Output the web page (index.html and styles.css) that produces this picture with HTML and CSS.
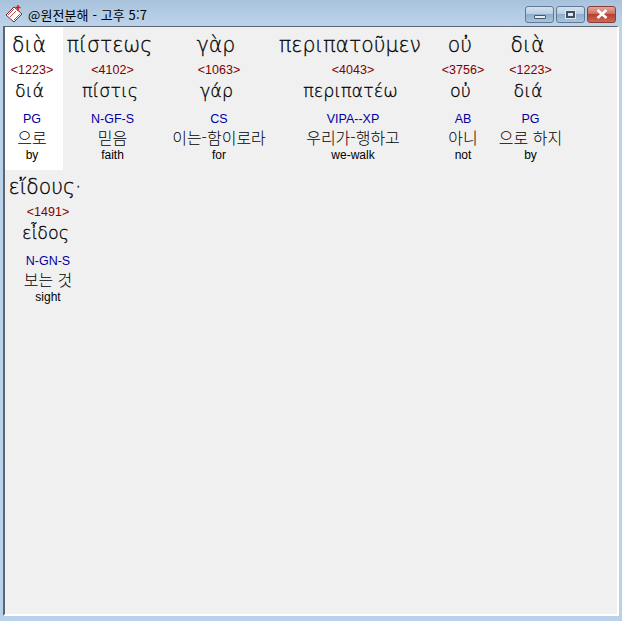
FILE: index.html
```html
<!DOCTYPE html>
<html lang="ko">
<head>
    <meta charset="UTF-8">
    <meta name="viewport" content="width=device-width, initial-scale=1.0">
    <title>원전분해</title>
    <link rel="stylesheet" href="styles.css">
</head>
<body>
    <div class="window">
        <div class="titlebar">
            <svg class="app-icon" width="18" height="18" viewBox="0 0 18 18">
                <path d="M1 10 L9 2 L17 9 L9 17 Z" fill="#fff" stroke="#7a2a2a" stroke-width="1"/>
                <path d="M3 10 L9 4 M5 12 L11 6 M9 15 L15 9" stroke="#c05050" stroke-width="1" fill="none"/>
                <path d="M13 0 V6 M10.5 2.5 H15.5" stroke="#e01010" stroke-width="1.4" fill="none"/>
            </svg>
            <span class="title-text">@원전분해 - 고후 5:7</span>
            <div class="controls">
                <div class="ctl-btn">
                    <span class="min-glyph"></span>
                </div>
                <div class="ctl-btn">
                    <span class="max-glyph"></span>
                </div>
                <div class="ctl-btn close">
                    <svg width="14" height="10" viewBox="0 0 14 10">
                        <path d="M2.5 1 L11.5 9 M11.5 1 L2.5 9" stroke="#fff" stroke-width="2.6" fill="none"/>
                    </svg>
                </div>
            </div>
        </div>
        <div class="client">
            <div class="verse-row">
                <div class="word w1 selected">
                    <div class="head">διὰ</div>
                    <div class="strong">&lt;1223&gt;</div>
                    <div class="lemma">διά</div>
                    <div class="pos">PG</div>
                    <div class="ko">으로</div>
                    <div class="en">by</div>
                </div>
                <div class="word w2">
                    <div class="head">πίστεως</div>
                    <div class="strong">&lt;4102&gt;</div>
                    <div class="lemma">πίστις</div>
                    <div class="pos">N-GF-S</div>
                    <div class="ko">믿음</div>
                    <div class="en">faith</div>
                </div>
                <div class="word w3">
                    <div class="head">γὰρ</div>
                    <div class="strong">&lt;1063&gt;</div>
                    <div class="lemma">γάρ</div>
                    <div class="pos">CS</div>
                    <div class="ko">이는-함이로라</div>
                    <div class="en">for</div>
                </div>
                <div class="word w4">
                    <div class="head">περιπατοῦμεν</div>
                    <div class="strong">&lt;4043&gt;</div>
                    <div class="lemma">περιπατέω</div>
                    <div class="pos">VIPA--XP</div>
                    <div class="ko">우리가-행하고</div>
                    <div class="en">we-walk</div>
                </div>
                <div class="word w5">
                    <div class="head">οὐ</div>
                    <div class="strong">&lt;3756&gt;</div>
                    <div class="lemma">οὐ</div>
                    <div class="pos">AB</div>
                    <div class="ko">아니</div>
                    <div class="en">not</div>
                </div>
                <div class="word w6">
                    <div class="head">διὰ</div>
                    <div class="strong">&lt;1223&gt;</div>
                    <div class="lemma">διά</div>
                    <div class="pos">PG</div>
                    <div class="ko">으로 하지</div>
                    <div class="en">by</div>
                </div>
            </div>
            <div class="verse-row">
                <div class="word w7">
                    <div class="head">εἴδους·</div>
                    <div class="strong">&lt;1491&gt;</div>
                    <div class="lemma">εἶδος</div>
                    <div class="pos">N-GN-S</div>
                    <div class="ko">보는 것</div>
                    <div class="en">sight</div>
                </div>
            </div>
        </div>
    </div>
</body>
</html>
```

FILE: styles.css
```css
html, body {
    margin: 0;
    padding: 0;
}

body {
    width: 622px;
    height: 621px;
    overflow: hidden;
    font-family: "Liberation Sans", Arial, sans-serif;
}

.window {
    width: 622px;
    height: 621px;
    display: flex;
    flex-direction: column;
    background: linear-gradient(to bottom, #a9c2dc 0, #bcd3ea 26px, #b9d1ea 100%);
}

.titlebar {
    height: 26px;
    flex: none;
    display: flex;
    align-items: center;
    padding: 2px 6px 0 5px;
    box-sizing: border-box;
}

.app-icon {
    flex: none;
}

.title-text {
    margin-left: 5px;
    font-family: "Noto Sans CJK KR", "Liberation Sans", sans-serif;
    font-size: 13px;
    letter-spacing: 0.1px;
    color: #000;
}

.controls {
    margin-left: auto;
    display: flex;
    gap: 2px;
}

.ctl-btn {
    width: 27px;
    height: 15px;
    border: 1px solid #5f7a98;
    border-radius: 3px;
    background: linear-gradient(to bottom, #d5e2ef 0, #b9cde2 45%, #92aecb 50%, #a9c3dc 100%);
    display: flex;
    align-items: center;
    justify-content: center;
}

.ctl-btn.close {
    border-color: #8a3f36;
    background: linear-gradient(to bottom, #e2a79c 0, #cf6f5f 45%, #b8402e 50%, #cc6a58 100%);
}

.min-glyph {
    width: 12px;
    height: 4px;
    margin-top: 6px;
    background: #e8eef5;
    border: 1px solid #47586c;
    box-sizing: border-box;
    border-radius: 1px;
}

.max-glyph {
    width: 9px;
    height: 7px;
    box-sizing: border-box;
    border: 2px solid #3e5066;
    outline: 1px solid #dfe8f1;
    background: #dfe8f1;
}

.client {
    flex: 1;
    margin: 0 3px 5px 3px;
    background-color: #f0f0f0;
    border-left: 2px solid #5c6670;
    border-top: 1px solid #5c6670;
    border-right: 2px solid #fff;
    border-bottom: 2px solid #fff;
    box-sizing: border-box;
}

.verse-row {
    display: flex;
}

.word {
    flex: none;
    height: 143px;
    box-sizing: border-box;
    display: flex;
    flex-direction: column;
    align-items: center;
    padding-top: 1px;
}

.word.selected {
    background-color: #fff;
}

.w1 { width: 58px; padding-right: 4px; }
.w2 { width: 99px; }
.w3 { width: 114px; }
.w4 { width: 154px; }
.w5 { width: 66px; }
.w6 { width: 69px; }
.w7 { width: 86px; padding-top: 0; }

.head {
    height: 34px;
    line-height: 34px;
    padding-right: 6px;
    font-family: "DejaVu Sans", sans-serif;
    font-size: 20.4px;
    font-weight: 200;
    -webkit-text-stroke: 0.3px #000;
    white-space: nowrap;
}

.strong {
    height: 15px;
    line-height: 15px;
    margin-top: 1px;
    font-size: 12.5px;
    color: #800000;
    white-space: nowrap;
}

.lemma {
    height: 26px;
    line-height: 26px;
    padding-right: 5px;
    font-family: "DejaVu Sans", sans-serif;
    font-size: 17.5px;
    font-weight: 200;
    -webkit-text-stroke: 0.3px #000;
    white-space: nowrap;
}

.pos {
    height: 15px;
    line-height: 15px;
    margin-top: 8px;
    font-size: 12.5px;
    color: #0000a0;
    white-space: nowrap;
}

.ko {
    height: 20px;
    line-height: 20px;
    font-family: "Noto Sans CJK KR", sans-serif;
    font-size: 16px;
    font-weight: 300;
    white-space: nowrap;
}

.en {
    height: 15px;
    line-height: 15px;
    margin-top: 1px;
    font-size: 12px;
    white-space: nowrap;
}
```
